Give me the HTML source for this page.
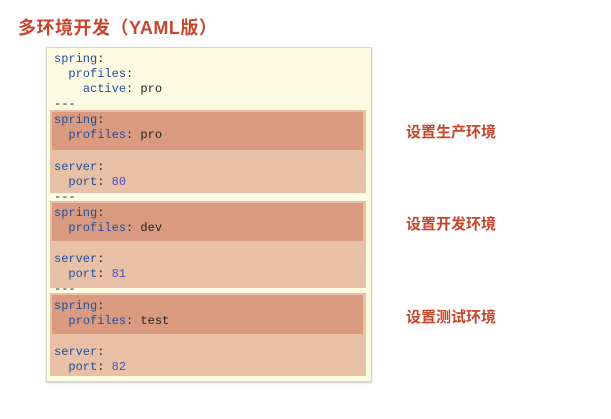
<!DOCTYPE html>
<html><head><meta charset="utf-8"><style>
body{margin:0;width:611px;height:419px;background:#fff;position:relative;overflow:hidden;font-family:"Liberation Sans","Noto Sans CJK SC",sans-serif}
.t{position:absolute;left:18px;top:14px;font-size:18px;font-weight:bold;color:#c8452e;letter-spacing:0.5px}
.box{position:absolute;left:46px;top:47px;width:324px;height:333px;background:#fdfbe2;border:1px solid #d8d6c8;box-shadow:0 1px 2px #ccc}
.l{position:absolute;left:50px;width:316px;background:#e8c0a6}
.d{position:absolute;left:52px;width:311px;background:#d99a80}
.c{position:absolute;left:54px;font-family:"Liberation Mono",monospace;font-size:12px;line-height:15px;color:#222;white-space:pre}
.k{color:#1d4e9e}.n{color:#5050c0}
.lab{position:absolute;left:406px;font-size:15px;font-weight:bold;color:#c8452e}
</style></head><body>
<div class="t">多环境开发（YAML版）</div>
<div class="box"></div>
<div class="l" style="top:110px;height:83px"></div>
<div class="d" style="top:112px;height:38px"></div>
<div class="l" style="top:201px;height:87px"></div>
<div class="d" style="top:203px;height:38px"></div>
<div class="l" style="top:293px;height:83px"></div>
<div class="d" style="top:295px;height:39px"></div>
<div class="c" style="top:52px"><span class="k">spring</span>:</div>
<div class="c" style="top:67px">  <span class="k">profiles</span>:</div>
<div class="c" style="top:82px">    <span class="k">active</span>: pro</div>
<div class="c" style="top:97px">---</div>
<div class="c" style="top:113px"><span class="k">spring</span>:</div>
<div class="c" style="top:128px">  <span class="k">profiles</span>: pro</div>
<div class="c" style="top:160px"><span class="k">server</span>:</div>
<div class="c" style="top:175px">  <span class="k">port</span>: <span class="n">80</span></div>
<div class="c" style="top:190px">---</div>
<div class="c" style="top:206px"><span class="k">spring</span>:</div>
<div class="c" style="top:221px">  <span class="k">profiles</span>: dev</div>
<div class="c" style="top:252px"><span class="k">server</span>:</div>
<div class="c" style="top:267px">  <span class="k">port</span>: <span class="n">81</span></div>
<div class="c" style="top:282px">---</div>
<div class="c" style="top:299px"><span class="k">spring</span>:</div>
<div class="c" style="top:314px">  <span class="k">profiles</span>: test</div>
<div class="c" style="top:345px"><span class="k">server</span>:</div>
<div class="c" style="top:360px">  <span class="k">port</span>: <span class="n">82</span></div>
<div class="lab" style="top:121px">设置生产环境</div>
<div class="lab" style="top:213px">设置开发环境</div>
<div class="lab" style="top:306px">设置测试环境</div>
</body></html>
